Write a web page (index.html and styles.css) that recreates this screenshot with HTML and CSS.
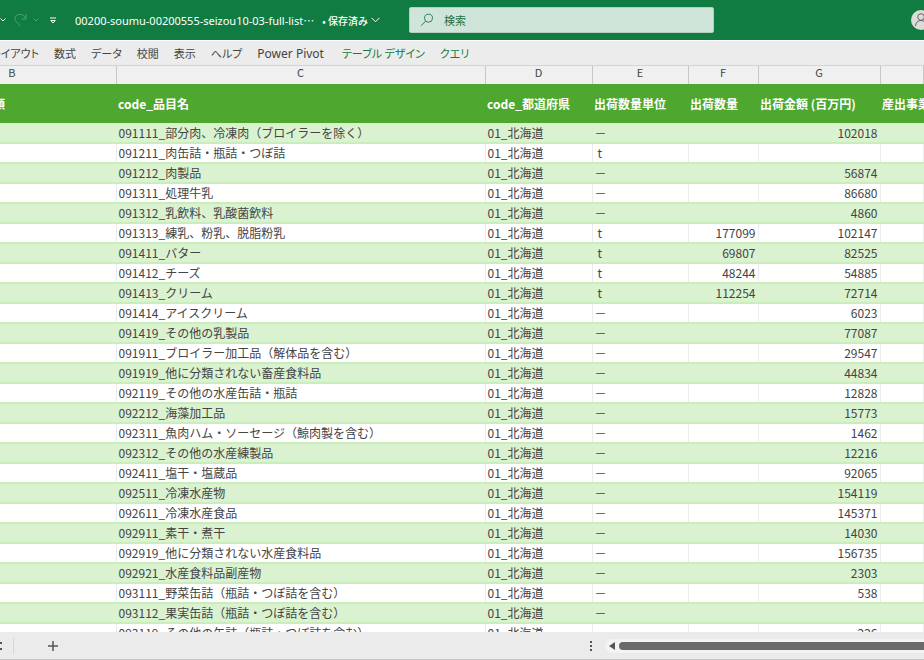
FILE: index.html
```
<!DOCTYPE html>
<html lang="ja">
<head>
  <meta charset="UTF-8" />
  <meta name="viewport" content="width=device-width, initial-scale=1.0"/>
  <title>00200-soumu-00200555-seizou10-03-full-list</title>
  <link rel="stylesheet" href="styles.css">
</head>
<body>
  <header class="titlebar">
    <div class="quick">
      <button class="icon-btn undo-more" aria-label="元に戻す履歴">
        <svg width="6" height="4" viewBox="0 0 6 4"><path d="M0.5 0.5L3 3L5.5 0.5"/></svg>
      </button>
      <button class="icon-btn redo" aria-label="やり直し" disabled>
        <svg width="13" height="14" viewBox="0 0 13 14"><path d="M12 1v5H7.500M11.700 5.500C10.500 2.800 8 1 5.200 1.300C2.400 1.600 0.700 3.800 1 6.200C1.200 8 3 9.500 6.500 13"/></svg>
      </button>
      <button class="icon-btn redo-more" aria-label="やり直し履歴" disabled>
        <svg width="6" height="4" viewBox="0 0 6 4"><path d="M0.5 0.5L3 3L5.5 0.5"/></svg>
      </button>
      <button class="icon-btn customize" aria-label="ツールバーのカスタマイズ">
        <svg width="6" height="7" viewBox="0 0 6 7"><path d="M0 1h6M0.800 3.500h4.400L3 6z"/></svg>
      </button>
      <span class="filename">00200-soumu-00200555-seizou10-03-full-list⋯</span>
      <button class="saved">• 保存済み
        <svg width="9" height="6" viewBox="0 0 9 6"><path d="M0.5 0.8L4.500 4.800L8.500 0.8"/></svg>
      </button>
    </div>
    <label class="search">
      <svg width="14" height="14" viewBox="0 0 14 14"><circle cx="8.500" cy="5.200" r="4"/><path d="M5.600 8.200L1 12.800"/></svg>
      <input type="search" placeholder="検索" aria-label="検索">
    </label>
    <button class="avatar" aria-label="アカウント">
      <svg width="20" height="20" viewBox="0 0 20 20"><circle cx="10" cy="7" r="3.300"/><path d="M4.500 16c0-3.500 2.500-5.500 5.500-5.500s5.500 2 5.500 5.500"/></svg>
    </button>
  </header>

  <nav class="ribbon">
    <button>レイアウト</button>
    <button>数式</button>
    <button>データ</button>
    <button>校閲</button>
    <button>表示</button>
    <button>ヘルプ</button>
    <button class="latin">Power Pivot</button>
    <button class="context">テーブル デザイン</button>
    <button class="context">クエリ</button>
  </nav>

  <main class="sheet">
    <table>
      <colgroup>
        <col class="col-b"><col class="col-c"><col class="col-d"><col class="col-e"><col class="col-f"><col class="col-g"><col class="col-h">
      </colgroup>
      <thead>
        <tr class="letters"><th>B</th><th>C</th><th>D</th><th>E</th><th>F</th><th>G</th><th></th></tr>
        <tr class="fields"><th class="cut">類</th><th>code_品目名</th><th>code_都道府県</th><th>出荷数量単位</th><th>出荷数量</th><th>出荷金額 (百万円)</th><th>産出事業</th></tr>
      </thead>
      <tbody>
        <tr><td></td><td>091111_部分肉、冷凍肉（ブロイラーを除く）</td><td>01_北海道</td><td>－</td><td></td><td>102018</td><td></td></tr>
        <tr><td></td><td>091211_肉缶詰・瓶詰・つぼ詰</td><td>01_北海道</td><td class="ton">t</td><td></td><td></td><td></td></tr>
        <tr><td></td><td>091212_肉製品</td><td>01_北海道</td><td>－</td><td></td><td>56874</td><td></td></tr>
        <tr><td></td><td>091311_処理牛乳</td><td>01_北海道</td><td>－</td><td></td><td>86680</td><td></td></tr>
        <tr><td></td><td>091312_乳飲料、乳酸菌飲料</td><td>01_北海道</td><td>－</td><td></td><td>4860</td><td></td></tr>
        <tr><td></td><td>091313_練乳、粉乳、脱脂粉乳</td><td>01_北海道</td><td class="ton">t</td><td>177099</td><td>102147</td><td></td></tr>
        <tr><td></td><td>091411_バター</td><td>01_北海道</td><td class="ton">t</td><td>69807</td><td>82525</td><td></td></tr>
        <tr><td></td><td>091412_チーズ</td><td>01_北海道</td><td class="ton">t</td><td>48244</td><td>54885</td><td></td></tr>
        <tr><td></td><td>091413_クリーム</td><td>01_北海道</td><td class="ton">t</td><td>112254</td><td>72714</td><td></td></tr>
        <tr><td></td><td>091414_アイスクリーム</td><td>01_北海道</td><td>－</td><td></td><td>6023</td><td></td></tr>
        <tr><td></td><td>091419_その他の乳製品</td><td>01_北海道</td><td>－</td><td></td><td>77087</td><td></td></tr>
        <tr><td></td><td>091911_ブロイラー加工品（解体品を含む）</td><td>01_北海道</td><td>－</td><td></td><td>29547</td><td></td></tr>
        <tr><td></td><td>091919_他に分類されない畜産食料品</td><td>01_北海道</td><td>－</td><td></td><td>44834</td><td></td></tr>
        <tr><td></td><td>092119_その他の水産缶詰・瓶詰</td><td>01_北海道</td><td>－</td><td></td><td>12828</td><td></td></tr>
        <tr><td></td><td>092212_海藻加工品</td><td>01_北海道</td><td>－</td><td></td><td>15773</td><td></td></tr>
        <tr><td></td><td>092311_魚肉ハム・ソーセージ（鯨肉製を含む）</td><td>01_北海道</td><td>－</td><td></td><td>1462</td><td></td></tr>
        <tr><td></td><td>092312_その他の水産練製品</td><td>01_北海道</td><td>－</td><td></td><td>12216</td><td></td></tr>
        <tr><td></td><td>092411_塩干・塩蔵品</td><td>01_北海道</td><td>－</td><td></td><td>92065</td><td></td></tr>
        <tr><td></td><td>092511_冷凍水産物</td><td>01_北海道</td><td>－</td><td></td><td>154119</td><td></td></tr>
        <tr><td></td><td>092611_冷凍水産食品</td><td>01_北海道</td><td>－</td><td></td><td>145371</td><td></td></tr>
        <tr><td></td><td>092911_素干・煮干</td><td>01_北海道</td><td>－</td><td></td><td>14030</td><td></td></tr>
        <tr><td></td><td>092919_他に分類されない水産食料品</td><td>01_北海道</td><td>－</td><td></td><td>156735</td><td></td></tr>
        <tr><td></td><td>092921_水産食料品副産物</td><td>01_北海道</td><td>－</td><td></td><td>2303</td><td></td></tr>
        <tr><td></td><td>093111_野菜缶詰（瓶詰・つぼ詰を含む）</td><td>01_北海道</td><td>－</td><td></td><td>538</td><td></td></tr>
        <tr><td></td><td>093112_果実缶詰（瓶詰・つぼ詰を含む）</td><td>01_北海道</td><td>－</td><td></td><td></td><td></td></tr>
        <tr><td></td><td>093119_その他の缶詰（瓶詰・つぼ詰を含む）</td><td>01_北海道</td><td>－</td><td></td><td>226</td><td></td></tr>
      </tbody>
    </table>
  </main>

  <footer class="bottombar">
    <span class="tab-end"><svg width="2" height="10" viewBox="0 0 2 10"><path d="M0 1h2v2H0zM0 7h2v2H0z"/></svg></span>
    <button class="add" aria-label="新しいシート">
      <svg width="10" height="10" viewBox="0 0 10 10"><path d="M5 0v10M0 5h10"/></svg>
    </button>
    <div class="hscroll">
      <svg class="grip" width="3" height="10" viewBox="0 0 3 10"><path d="M0 0h2v2H0zM0 4h2v2H0zM0 8h2v2H0z"/></svg>
      <div class="track">
        <button class="arrow" aria-label="左へスクロール">
          <svg width="6" height="8" viewBox="0 0 6 8"><path d="M6 0v8L0 4z"/></svg>
        </button>
        <div class="thumb"></div>
      </div>
    </div>
  </footer>
</body>
</html>
```

FILE: styles.css
```
* {
  box-sizing: border-box;
}
body {
  margin: 0;
  height: 100vh;
  display: flex;
  flex-direction: column;
  overflow: hidden;
  background-color: #fff;
  color: #444;
  font-family: "Noto Sans CJK JP", sans-serif;
  font-size: 12px;
}
button {
  padding: 0;
  border: 0;
  background: none;
  color: inherit;
  font: inherit;
  cursor: pointer;
}
svg {
  display: block;
  flex: none;
}

/* title bar */
.titlebar {
  flex: none;
  display: flex;
  align-items: center;
  height: 40px;
  background-color: #107c41;
  color: #fff;
}
.quick {
  flex: none;
  display: flex;
  align-items: center;
  width: 409px;
  font-size: 11px;
  white-space: nowrap;
}
.quick svg {
  fill: none;
  stroke: #fff;
}
.quick .redo svg, .quick .redo-more svg {
  stroke: #4f9f73;
}
.redo {
  margin-left: 8px;
}
.redo-more {
  margin-left: 6px;
}
.customize {
  margin-left: 11px;
}
.filename {
  margin-left: 19px;
  font-family: "Noto Sans", "Noto Sans CJK JP", sans-serif;
}
.saved {
  display: flex;
  align-items: center;
  gap: 3px;
  margin-left: 8px;
  font-size: 10px;
  font-weight: 500;
}
.search {
  display: flex;
  align-items: center;
  gap: 10px;
  width: 305px;
  height: 26px;
  padding-left: 10px;
  border: 1px solid #b5cfc0;
  border-radius: 2px;
  background-color: #cfe5d9;
}
.search svg {
  fill: none;
  stroke: #2d8156;
}
.search input {
  flex: 1;
  min-width: 0;
  padding: 0;
  border: 0;
  outline: 0;
  background: none;
  color: #1e6e43;
  font: inherit;
  font-size: 11px;
}
.search input::placeholder {
  color: #1e6e43;
}
.avatar {
  flex: none;
  margin-left: auto;
  margin-right: -7px;
  border-radius: 50%;
  background-color: #dcdcdc;
}
.avatar svg {
  fill: none;
  stroke: #666;
}

/* ribbon tabs */
.ribbon {
  flex: none;
  display: flex;
  align-items: center;
  gap: 15px;
  height: 26px;
  margin-left: -9px;
  border-top: 1px solid #fff;
  border-bottom: 1px solid #d4d4d4;
  background-color: #ececec;
  font-size: 11px;
  white-space: nowrap;
  font-feature-settings: "palt";
}
.ribbon .latin {
  margin-right: 3px;
  font-family: "Noto Sans", sans-serif;
  font-size: 12px;
}
.ribbon .context {
  color: #107c41;
}

/* grid */
.sheet {
  flex: 1;
  min-height: 0;
  overflow: hidden;
}
table {
  width: calc(100% + 92px);
  margin-left: -92px;
  table-layout: fixed;
  border-collapse: collapse;
  line-height: 16px;
  white-space: nowrap;
}
.col-b { width: 208px; }
.col-c { width: 369px; }
.col-d { width: 107px; }
.col-e { width: 96px; }
.col-f { width: 70px; }
.col-g { width: 122px; }
th, td {
  padding: 0 2px;
  text-align: left;
}
.letters th {
  height: 18px;
  border-right: 1px solid #c8c8c8;
  background-color: #f0f0f0;
  font-size: 11px;
  font-weight: 400;
  line-height: 12px;
  text-align: center;
  vertical-align: top;
}
.fields th {
  height: 39px;
  background-color: #4ea72e;
  color: #fff;
  font-weight: 700;
}
.fields .cut {
  padding-left: 85px;
}
td {
  height: 20px;
  border-right: 1px solid #ebebeb;
  border-bottom: 2px solid #c9eebb;
}
tbody tr:nth-child(odd) td {
  border-right-color: #daf2d0;
  background-color: #daf2d0;
}
td:nth-child(5), td:nth-child(6) {
  text-align: right;
}
td.ton {
  padding-left: 5px;
}

/* sheet tabs and scroll bar */
.bottombar {
  flex: none;
  display: flex;
  align-items: center;
  height: 28px;
  border-bottom: 1px solid #c8c8c8;
  background-color: #ebebeb;
}
.tab-end {
  width: 14px;
  padding: 3px 0;
  border-right: 1px solid #d6d6d6;
}
.add {
  margin-left: 34px;
}
.add svg {
  stroke: #555;
  stroke-width: 1.5;
}
.hscroll {
  flex: none;
  display: flex;
  align-items: center;
  gap: 12px;
  width: 334px;
  margin-left: auto;
}
.track {
  flex: 1;
  display: flex;
  align-items: center;
  gap: 4px;
  height: 14px;
  padding-left: 4px;
  border-radius: 7px 0 0 7px;
  background-color: #f3f3f3;
}
.grip, .arrow svg, .tab-end svg {
  fill: #555;
}
.thumb {
  flex: 1;
  height: 8px;
  border-radius: 4px 0 0 4px;
  background-color: #6a6a6a;
}
```
